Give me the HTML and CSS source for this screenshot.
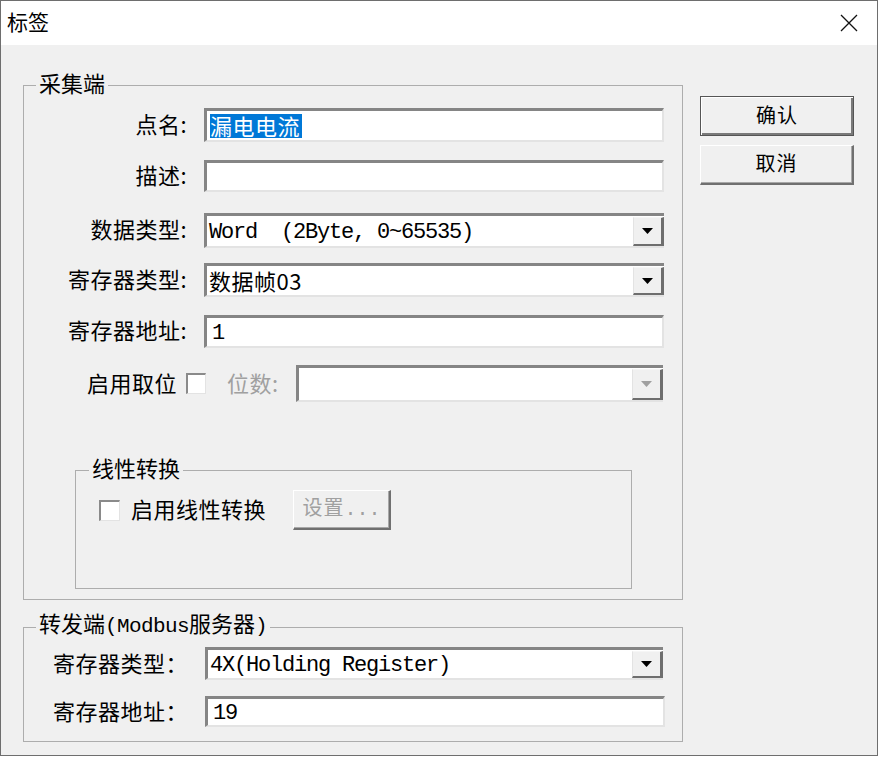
FILE: index.html
```html
<!DOCTYPE html>
<html lang="zh-CN">
<head>
<meta charset="utf-8">
<title>标签</title>
<link rel="stylesheet" href="styles.css">
</head>
<body>
<div class="window">
  <div class="titlebar">
    <span class="title">标签</span>
    <svg class="close" width="18" height="18" viewBox="0 0 18 18"><path d="M1 1L17 17M17 1L1 17" stroke="#111" stroke-width="1.3" fill="none"/></svg>
  </div>
  <div class="main">
    <div class="left">
      <fieldset class="group g1">
        <legend>采集端</legend>
        <div class="row r1"><span class="lbl">点名:</span><div class="field edit"><span class="sel">漏电电流</span></div></div>
        <div class="row r2"><span class="lbl">描述:</span><div class="field edit"></div></div>
        <div class="row r3"><span class="lbl">数据类型:</span><div class="field combo"><span class="val mono">Word  (2Byte, 0~65535)</span><span class="arrow"><svg width="11" height="6" viewBox="0 0 11 6"><polygon points="0,0 11,0 5.5,6" fill="#000"/></svg></span></div></div>
        <div class="row r4"><span class="lbl">寄存器类型:</span><div class="field combo"><span class="val">数据帧03</span><span class="arrow"><svg width="11" height="6" viewBox="0 0 11 6"><polygon points="0,0 11,0 5.5,6" fill="#000"/></svg></span></div></div>
        <div class="row r5"><span class="lbl">寄存器地址:</span><div class="field edit"><span class="mono">1</span></div></div>
        <div class="row r6"><span class="txt">启用取位</span><span class="chk"></span><span class="txt dis bits">位数:</span><div class="field combo disabled"><span class="val"></span><span class="arrow"><svg width="11" height="6" viewBox="0 0 11 6"><polygon points="0,0 11,0 5.5,6" fill="#a0a0a0"/></svg></span></div></div>
        <fieldset class="group g3">
          <legend>线性转换</legend>
          <div class="row r7"><span class="chk"></span><span class="txt lin">启用线性转换</span><button class="btn btn-dis" type="button">设置<span class="dots">...</span></button></div>
        </fieldset>
      </fieldset>
      <fieldset class="group g2">
        <legend>转发端<span class="mono">(Modbus</span>服务器<span class="mono">)</span></legend>
        <div class="row s1"><span class="lbl2">寄存器类型：</span><div class="field combo"><span class="val mono">4X(Holding Register)</span><span class="arrow"><svg width="11" height="6" viewBox="0 0 11 6"><polygon points="0,0 11,0 5.5,6" fill="#000"/></svg></span></div></div>
        <div class="row s2"><span class="lbl2">寄存器地址：</span><div class="field edit wide"><span class="mono">19</span></div></div>
      </fieldset>
    </div>
    <div class="right">
      <button class="btn btn-def" type="button">确认</button>
      <button class="btn btn-std" type="button">取消</button>
    </div>
  </div>
</div>
</body>
</html>
```

FILE: styles.css
```css
* { box-sizing: border-box; }
html, body { margin: 0; padding: 0; background: #fff; }
body {
  font-family: "Noto Sans CJK SC", "Noto Sans", sans-serif;
  font-size: 22px;
  color: #000;
}
.window {
  width: 878px;
  height: 756px;
  border: 1px solid #6e6e6e;
  display: flex;
  flex-direction: column;
  background: #f0f0f0;
}
.titlebar {
  height: 44px;
  flex: none;
  background: #fff;
  display: flex;
  align-items: center;
  justify-content: space-between;
  padding: 0 19px 0 6px;
}
.title { font-size: 21px; line-height: 24px; padding-bottom: 4px; }
.close { display: block; }
.main { flex: 1; display: flex; align-items: flex-start; }
.left { width: 660px; flex: none; margin-left: 22px; padding-top: 28px; }
.right {
  margin-left: 17px;
  padding-top: 51px;
  display: flex;
  flex-direction: column;
  gap: 9px;
}
.group {
  margin: 0;
  padding: 0;
  border: 1px solid #adadad;
  min-width: 0;
}
.group legend {
  padding: 0 3px 5px 3px;
  margin-left: 12px;
  font-size: 22px;
  line-height: 19px;
}
.g1 { padding-bottom: 10px; }
.g2 { margin-top: 13px; padding-bottom: 14px; }
.g3 { margin: 56px 0 0 51px; width: 557px; padding-bottom: 58px; }
.g3 legend { margin-left: 13px; }
.row { display: flex; align-items: center; line-height: 24px; }
.r1 { margin-top: 11px; height: 34px; }
.r2 { margin-top: 18px; height: 32px; }
.r3 { margin-top: 21px; height: 35px; }
.r4 { margin-top: 15px; height: 34px; }
.r5 { margin-top: 18px; height: 33px; }
.r6 { margin-top: 17px; height: 37px; padding-left: 63px; padding-right: 19px; }
.r7 { margin-top: 8px; height: 40px; padding-left: 23px; }
.s1 { margin-top: 6px; height: 33px; padding-left: 29px; }
.s2 { margin-top: 16px; height: 31px; padding-left: 29px; }
.lbl {
  width: 163px;
  margin-right: 17px;
  text-align: right;
  letter-spacing: 0.5px;
  white-space: nowrap;
  padding-bottom: 5px;
}
.lbl2 { width: 152px; letter-spacing: 0.5px; white-space: nowrap; padding-bottom: 4px; }
.txt { letter-spacing: 0.5px; white-space: nowrap; padding-bottom: 4px; }
.dis { color: #a0a0a0; }
.bits { margin-left: 21px; }
.lin { margin-left: 11px; }
.field {
  height: 100%;
  width: 460px;
  flex: none;
  background: #fff;
  border-style: solid;
  border-width: 3px 2px 2px 3px;
  border-color: #858585 #e3e3e3 #e3e3e3 #858585;
  display: flex;
  align-items: center;
  padding-left: 3px;
  overflow: hidden;
}
.s1 .field { width: 458px; }
.r6 .field { width: 367px; margin-left: auto; }
.combo { border-right-width: 0; border-bottom-width: 2px; align-items: stretch; padding-left: 2px; }
.combo .val { flex: 1; display: flex; align-items: center; letter-spacing: 0.5px; white-space: pre; padding-bottom: 1px; }
.combo .val.mono { letter-spacing: -1.2px; padding-top: 4px; padding-bottom: 0; }
.arrow {
  width: 31px;
  flex: none;
  margin-top: 1px;
  background: #f0f0f0;
  border-style: solid;
  border-width: 1px 3px 2px 1px;
  border-color: #f6f6f6 #6e6e6e #6e6e6e #e3e3e3;
  display: flex;
  align-items: center;
  justify-content: center;
}
.arrow svg { display: block; }
.sel {
  background: #0078d7;
  color: #fff;
  letter-spacing: 0.5px;
  line-height: 22px;
  height: 24px;
  padding-right: 2px;
}
.mono {
  font-family: "Liberation Mono", "DejaVu Sans Mono", monospace;
  font-size: 22px;
  letter-spacing: -1.2px;
  white-space: pre;
}
.group legend .mono { font-size: 21px; letter-spacing: -0.6px; }
.edit .mono { padding-left: 2px; padding-top: 4px; }
.chk {
  width: 21px;
  height: 21px;
  flex: none;
  background: #fff;
  border-style: solid;
  border-width: 2px 1px 1px 2px;
  border-color: #8a8a8a #e3e3e3 #e3e3e3 #8a8a8a;
}
.r6 .chk { margin-left: 9px; width: 20px; }
.btn {
  font-family: "Noto Sans CJK SC", sans-serif;
  font-size: 20px;
  line-height: 24px;
  background: #f0f0f0;
  color: #000;
  padding: 0 0 3px 0;
  margin: 0;
  border-style: solid;
  width: 154px;
  height: 40px;
  letter-spacing: 1px;
}
.dots {
  font-family: "Liberation Mono", monospace;
  font-size: 20px;
  letter-spacing: 0;
}
.btn-def {
  border-width: 1px;
  border-color: #555;
  box-shadow: inset 1px 1px 0 #fff, inset -2px -2px 0 #7a7a7a;
}
.btn-std {
  border-width: 1px 2px 2px 1px;
  border-color: #fff #707070 #707070 #fff;
  box-shadow: inset -1px -1px 0 #a8a8a8;
}
.btn-dis {
  width: 98px;
  margin-left: 27px;
  color: #a0a0a0;
  border-width: 1px 2px 2px 1px;
  border-color: #fff #707070 #707070 #fff;
  box-shadow: inset -1px -1px 0 #a8a8a8;
}
```
